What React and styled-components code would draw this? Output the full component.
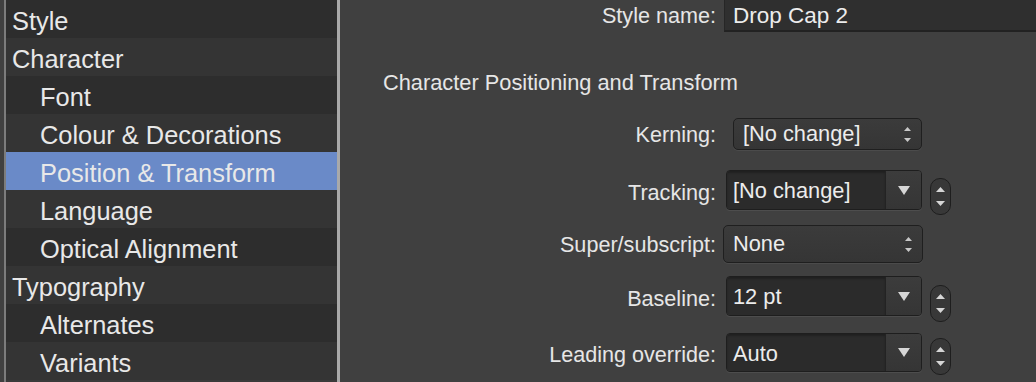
import React from "react";
import styled, { createGlobalStyle } from "styled-components";

const Global = createGlobalStyle`
  html, body { margin: 0; padding: 0; background: #404040; }
  body { font-family: "Liberation Sans", Arial, sans-serif; overflow: hidden; }
`;

const Page = styled.div`
  display: flex;
  width: 1036px;
  height: 382px;
  background: #404040;
`;

const Sidebar = styled.div`
  margin-left: 4px;
  width: 331px;
  height: 382px;
  border-left: 2px solid #7c7c7c;
  border-right: 3px solid #a9a9a9;
  background: #3a3a3a;
  display: flex;
  flex-direction: column;
`;

const NavItem = styled.div`
  height: 38px;
  line-height: 38px;
  padding-top: 2px;
  box-sizing: border-box;
  padding-left: ${(p) => (p.$sub ? 34 : 6)}px;
  font-size: 25.4px;
  color: #e8e8e8;
  white-space: nowrap;
  background: ${(p) => (p.$selected ? "#6a8ac8" : p.$odd ? "#2d2d2d" : "#343434")};
`;

const Panel = styled.div`
  flex: 1;
  display: flex;
  flex-direction: column;
  color: #e6e6e6;
  font-size: 21.6px;
`;

const Row = styled.div`
  display: flex;
  align-items: ${(p) => p.$align || "center"};
  height: ${(p) => p.$h}px;
  margin-top: ${(p) => p.$mt || 0}px;
`;

const Label = styled.div`
  width: 376px;
  text-align: right;
  white-space: nowrap;
  padding-top: ${(p) => p.$pt || 0}px;
  box-sizing: border-box;
  line-height: ${(p) => (p.$lh ? p.$lh + "px" : "normal")};
`;

const NameInput = styled.div`
  margin-left: 8px;
  flex: 1;
  height: 32px;
  box-sizing: border-box;
  background: #2f2f2f;
  border-left: 1px solid #262626;
  border-bottom: 2px solid #222;
  padding-left: 8px;
  font-size: 22.5px;
  line-height: 32px;
  color: #ececec;
`;

const Heading = styled.div`
  margin-top: 38px;
  margin-left: 43px;
  height: 26px;
  line-height: 26px;
  font-size: 21.8px;
  color: #e6e6e6;
`;

const Popup = styled.div`
  margin-left: ${(p) => p.$ml}px;
  width: ${(p) => p.$w}px;
  height: ${(p) => p.$h}px;
  box-sizing: border-box;
  border: 1px solid #1f1f1f;
  border-radius: 5px;
  background: linear-gradient(#3b3b3b, #353535);
  box-shadow: 0 1px 0 rgba(255, 255, 255, 0.06);
  display: flex;
  align-items: center;
  justify-content: space-between;
  padding: 0 10px 0 9px;
  color: #ececec;
  font-size: 21.8px;
`;

const PopupArrows = styled.div`
  display: flex;
  flex-direction: column;
  align-items: center;
  gap: 7px;
`;

const Combo = styled.div`
  margin-left: 10px;
  width: 196px;
  height: ${(p) => p.$h}px;
  box-sizing: border-box;
  border: 1px solid #1e1e1e;
  border-radius: 4px;
  display: flex;
  overflow: hidden;
  box-shadow: 0 1px 0 rgba(255, 255, 255, 0.07);
`;

const ComboField = styled.div`
  flex: 1;
  background: #2b2b2b;
  box-shadow: inset 0 2px 2px rgba(0, 0, 0, 0.25);
  padding-left: 6px;
  display: flex;
  align-items: center;
  color: #ececec;
  font-size: 21.8px;
  padding-top: 2px;
`;

const ComboButton = styled.div`
  width: 34px;
  border-left: 1px solid #232323;
  background: linear-gradient(#3c3c3c, #353535);
  display: flex;
  align-items: center;
  justify-content: center;
  padding-left: 1px;
`;

const Stepper = styled.div`
  margin-left: 8px;
  margin-top: ${(p) => p.$mt}px;
  width: 21px;
  height: 37px;
  box-sizing: border-box;
  border: 1px solid #1e1e1e;
  border-radius: 10px;
  background: #383838;
  display: flex;
  flex-direction: column;
  align-items: center;
  justify-content: center;
  gap: 9px;
`;

const Tri = ({ w, h, down, color = "#d6d6d6" }) => (
  <svg width={w} height={h} viewBox={`0 0 ${w} ${h}`} style={{ display: "block" }}>
    <polygon
      points={down ? `0,0 ${w},0 ${w / 2},${h}` : `${w / 2},0 ${w},${h} 0,${h}`}
      fill={color}
    />
  </svg>
);

const StepperControl = ({ mt }) => (
  <Stepper $mt={mt}>
    <Tri w={9} h={5} />
    <Tri w={9} h={5} down />
  </Stepper>
);

const ComboControl = ({ value, h }) => (
  <Combo $h={h}>
    <ComboField>{value}</ComboField>
    <ComboButton>
      <Tri w={12} h={9} down />
    </ComboButton>
  </Combo>
);

const nav = [
  { t: "Style" },
  { t: "Character" },
  { t: "Font", sub: true },
  { t: "Colour & Decorations", sub: true },
  { t: "Position & Transform", sub: true, sel: true },
  { t: "Language", sub: true },
  { t: "Optical Alignment", sub: true },
  { t: "Typography" },
  { t: "Alternates", sub: true },
  { t: "Variants", sub: true },
];

export default function App() {
  return (
    <>
      <Global />
      <Page>
        <Sidebar>
          {nav.map((n, i) => (
            <NavItem key={n.t} $sub={n.sub} $selected={n.sel} $odd={i % 2 === 0}>
              {n.t}
            </NavItem>
          ))}
        </Sidebar>
        <Panel>
          <Row $h={32}>
            <Label>Style name:</Label>
            <NameInput>Drop Cap 2</NameInput>
          </Row>
          <Heading>Character Positioning and Transform</Heading>
          <Row $h={32} $mt={22}>
            <Label $pt={1}>Kerning:</Label>
            <Popup $ml={17} $w={189} $h={32}>
              <span>[No change]</span>
              <PopupArrows>
                <Tri w={7} h={4} color="#c8c8c8" />
                <Tri w={7} h={4} down color="#c8c8c8" />
              </PopupArrows>
            </Popup>
          </Row>
          <Row $h={40} $mt={20} $align="flex-start">
            <Label $lh={40} $pt={3}>Tracking:</Label>
            <ComboControl value="[No change]" h={40} />
            <StepperControl mt={8} />
          </Row>
          <Row $h={38} $mt={15}>
            <Label $pt={2}>Super/subscript:</Label>
            <Popup $ml={7} $w={200} $h={38}>
              <span>None</span>
              <PopupArrows>
                <Tri w={7} h={4} color="#c8c8c8" />
                <Tri w={7} h={4} down color="#c8c8c8" />
              </PopupArrows>
            </Popup>
          </Row>
          <Row $h={40} $mt={13} $align="flex-start">
            <Label $lh={40} $pt={3}>Baseline:</Label>
            <ComboControl value="12 pt" h={40} />
            <StepperControl mt={9} />
          </Row>
          <Row $h={39} $mt={17} $align="flex-start">
            <Label $lh={39} $pt={2}>Leading override:</Label>
            <ComboControl value="Auto" h={39} />
            <StepperControl mt={5} />
          </Row>
        </Panel>
      </Page>
    </>
  );
}
